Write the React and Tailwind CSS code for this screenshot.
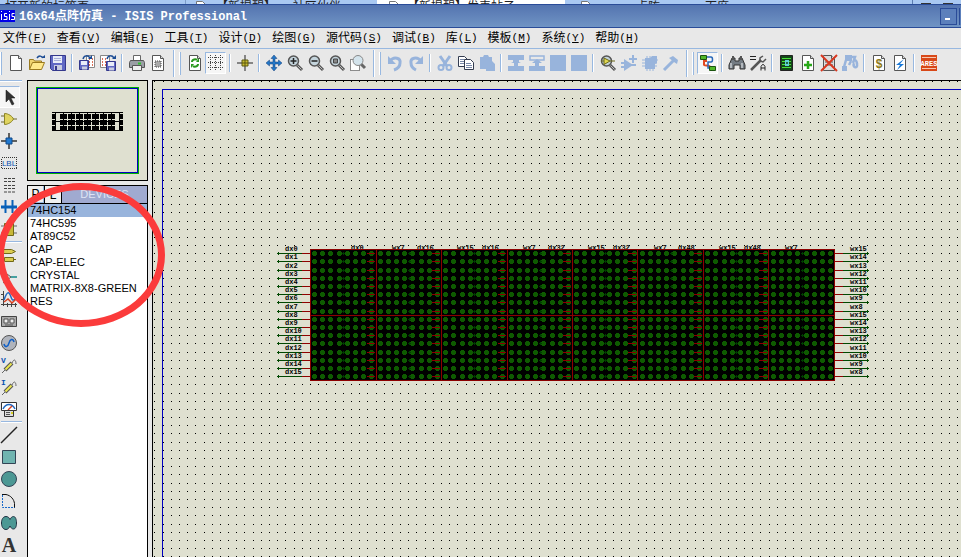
import { useState } from 'react';

const MENUS = [
    ['文件', 'F'], ['查看', 'V'], ['编辑', 'E'], ['工具', 'T'], ['设计', 'D'], ['绘图', 'G'],
    ['源代码', 'S'], ['调试', 'B'], ['库', 'L'], ['模板', 'M'], ['系统', 'Y'], ['帮助', 'H'],
]

const DEVICES = ['74HC154', '74HC595', 'AT89C52', 'CAP', 'CAP-ELEC', 'CRYSTAL', 'MATRIX-8X8-GREEN', 'RES']

// light blue used for everything that is disabled
const OFF = '#98b4dc'

const Sheet = ({ children, fill = '#fff' }) => (
    <>
        <path d="M2.500 .5h8l3 3v12h-11z" fill={fill} stroke="#555" />
        <path d="M10.500 .5v3h3" fill="#ddd" stroke="#555" />
        {children}
    </>
)

const Lens = ({ children }) => (
    <>
        <path d="M10 10l5 5" stroke="#555" strokeWidth="3" />
        <path d="M10.500 10.500l4 4" stroke="#bbb" strokeWidth="1" />
        <circle cx="6.500" cy="6" r="5" fill="#c4d4dc" stroke="#555" strokeWidth="1.500" />
        {children}
    </>
)

const Floppy = () => (
    <>
        <path d="M.5 .5h15v15h-13l-2-2z" fill="#6068c4" stroke="#34388c" />
        <path d="M3 1h9v7H3z" fill="#e8ecf8" />
        <path d="M4 3.500h7M4 5.500h7" stroke="#a8b0d8" />
        <path d="M4 10h8v5H4z" fill="#c8cce0" />
        <path d="M5 11h2v4H5z" fill="#34388c" />
    </>
)

const SmallFloppy = ({ x, y }) => (
    <g transform={`translate(${x} ${y})`}>
        <path d="M.5 .5h9v9h-9z" fill="#6068c4" stroke="#34388c" />
        <path d="M2 1h6v4H2z" fill="#e8ecf8" />
        <path d="M3 6.500h5v3H3z" fill="#c8cce0" />
    </g>
)

const ICONS = {
    new: <Sheet />,
    open: (
        <>
            <path d="M.5 14.500v-10h4l1 1.500h7v3" fill="#f0d470" stroke="#9a7a20" />
            <path d="M.5 14.500l3-7h12l-3 7z" fill="#ffe98c" stroke="#9a7a20" />
            <path d="M8 3c2-3 5-2 6 0" fill="none" stroke="#1c4c94" strokeWidth="1.500" />
            <path d="M12 3h4v-3z" fill="#1c4c94" />
        </>
    ),
    save: <Floppy />,
    import: (
        <>
            <path d="M7.500 .5h8v12h-8z" fill="#fff" stroke="#888" />
            <path d="M10 4h4M10 7h4M10 10h4" stroke="#d04020" strokeWidth="1.500" strokeDasharray="1 2" />
            <SmallFloppy x="0" y="5" />
            <path d="M4 4c1-4 5-4 7-1" fill="none" stroke="#1c4c94" strokeWidth="1.500" />
            <path d="M9 4h4v-4z" fill="#1c4c94" />
        </>
    ),
    export: (
        <>
            <path d="M.5 .5h9v12h-9z" fill="#fff" stroke="#888" />
            <path d="M2 4h6M2 7h6M2 10h6" stroke="#d04020" strokeWidth="1.500" strokeDasharray="1 2" />
            <SmallFloppy x="6" y="6" />
            <path d="M7 4c1-4 5-4 7-1" fill="none" stroke="#1c4c94" strokeWidth="1.500" />
            <path d="M12 4h4v-4z" fill="#1c4c94" />
        </>
    ),
    print: (
        <>
            <path d="M4.500 7v-6.500h7v6.500" fill="#fff" stroke="#666" />
            <path d="M1.500 5.500h13l1 2v5h-15v-5z" fill="#9a9ea4" stroke="#555" />
            <path d="M3.500 10.500h9v5h-9z" fill="#eee" stroke="#555" />
            <path d="M9 7.500h3v2H9z" fill="#30c030" />
        </>
    ),
    area: (
        <Sheet>
            <path d="M5 6h6v6H5z" fill="#aaa" stroke="#444" strokeDasharray="1 1" />
        </Sheet>
    ),
    refresh: (
        <Sheet>
            <path d="M5 7c0-3 4-3 5-2M11 9c0 3-4 3-5 2" fill="none" stroke="#28981c" strokeWidth="2" />
            <path d="M9 7h3V3zM7 9H4v4z" fill="#28981c" />
        </Sheet>
    ),
    grid: (
        <path
            d="M0 2.500h16M0 7.500h16M0 12.500h16M2.500 0v16M7.500 0v16M12.500 0v16"
            stroke="#444" strokeDasharray="1 1" shapeRendering="crispEdges"
        />
    ),
    origin: (
        <>
            <path d="M8 0v16M0 8h16" stroke="#222" />
            <path d="M5 5h6v6H5z" fill="#c8bc30" stroke="#5c5810" />
            <path d="M8 5v6M5 8h6" stroke="#5c5810" />
        </>
    ),
    pan: (
        <path
            d="M8 0l3 3.500H9V7h3.500V5L16 8l-3.500 3V9H9v3.500h2L8 16l-3-3.500h2V9H3.500v2L0 8l3.500-3v2H7V3.500H5z"
            fill="#2478c8" stroke="#123c78" strokeWidth=".5"
        />
    ),
    zoomIn: <Lens><path d="M6.500 3v6M3.500 6h6" stroke="#222" strokeWidth="1.500" /></Lens>,
    zoomOut: <Lens><path d="M3.500 6h6" stroke="#222" strokeWidth="1.500" /></Lens>,
    zoomAll: <Lens><path d="M4.500 4h4v4h-4z" fill="#888" stroke="#444" /></Lens>,
    zoomArea: (
        <>
            <path d="M.5 4.500h9v11h-9z" fill="#fff" stroke="#222" strokeDasharray="1 1" />
            <path d="M11 9l4 4" stroke="#666" strokeWidth="3" />
            <circle cx="8" cy="5.500" r="5" fill="#d4e4ec" stroke="#888" />
        </>
    ),
    undo: (
        <>
            <path d="M3 6c4-5 11-3 10 2 0 4-3 6-6 7" fill="none" stroke={OFF} strokeWidth="3" />
            <path d="M1 1v8h8z" fill={OFF} />
        </>
    ),
    redo: (
        <>
            <path d="M13 6C9 1 2 3 3 8c0 4 3 6 5 7" fill="none" stroke={OFF} strokeWidth="3" />
            <path d="M15 1v8H7z" fill={OFF} />
        </>
    ),
    cut: (
        <>
            <path d="M3 1l7 10M13 1L6 11" stroke={OFF} strokeWidth="3" />
            <circle cx="4" cy="12.500" r="2.500" fill="none" stroke={OFF} strokeWidth="2" />
            <circle cx="12" cy="12.500" r="2.500" fill="none" stroke={OFF} strokeWidth="2" />
        </>
    ),
    copy: (
        <>
            <path d="M.5 1.500h6l3 3v7h-9z" fill="#fff" stroke="#333c50" />
            <path d="M2 4.500h4M2 6.500h5M2 8.500h5" stroke="#7888a8" />
            <path d="M6.500 4.500h6l3 3v7h-9z" fill="#fff" stroke="#333c50" />
            <path d="M8 8.500h5M8 10.500h6M8 12.500h6" stroke="#7888a8" />
        </>
    ),
    paste: <path d="M1 2h3l1-2h4l1 2h3v4l3 3v7H7v-2H1z" fill={OFF} />,
    blockCopy: <path d="M0 0h16v5h-5v2l2 1h-3v3h6v5H0v-5h6V8H3l2-1V5H0z" fill={OFF} />,
    blockMove: (
        <>
            <path d="M1 1h14v4H1z" fill="none" stroke={OFF} strokeWidth="1.500" />
            <path d="M8 4l5 4h-3v3h6v5H0v-5h6V8H3z" fill={OFF} />
        </>
    ),
    block: <path d="M0 0h16v16H0z" fill={OFF} />,
    pick: (
        <Lens>
            <path d="M4 3l6 3-6 3.500z" fill="#e0d850" stroke="#6c6818" />
            <path d="M1 6h3M10 6h5" stroke="#6c6818" />
        </Lens>
    ),
    makeDevice: (
        <>
            <path d="M3 4l9 6-9 6z" fill={OFF} />
            <path d="M0 8h5M0 12h5M10 10h5M12 0v8M8 4h8" stroke={OFF} strokeWidth="2" />
        </>
    ),
    packaging: (
        <>
            <path d="M3 3h5l2-2h5v7l-2 1v5H3z" fill={OFF} />
            <path d="M5 1v15M8 1v15M11 2v14M0 5h16M0 8h15M0 11h15" stroke={OFF} />
        </>
    ),
    decompose: (
        <>
            <path d="M6 3l4-2 5 4-1 4-3-2z" fill={OFF} />
            <path d="M11 5L1 15" stroke={OFF} strokeWidth="3" />
        </>
    ),
    wire: (
        <>
            <path d="M7 6H4v4c0 1 6 0 6 2" fill="none" stroke="#e04820" strokeWidth="2" />
            <path d="M6 2h5c2 0 2 5 0 5H8v6h2" fill="none" stroke="#2868b8" strokeWidth="1.500" />
            <path d="M.5 .5h6v4h-6zM9.500 11.500h6v4h-6z" fill="#50b828" stroke="#1c5410" />
        </>
    ),
    find: (
        <>
            <path d="M3 3h3v3h4V3h3l3 7v4h-5v-4H5v4H0v-4z" fill="#747c84" stroke="#333" />
            <path d="M4 1v4M12 1v4" stroke="#555" strokeWidth="2" />
            <path d="M2 8v5M13 8v5" stroke="#c8ccd0" strokeWidth="1.500" />
        </>
    ),
    assign: (
        <>
            <path d="M0 1.500h6M0 4.500h6" stroke="#222" />
            <path d="M1 15L11 5" stroke="#555" strokeWidth="2.500" />
            <path d="M13 1l-3 2v3l3 1 3-3" fill="none" stroke="#555" strokeWidth="1.500" />
            <path d="M11 15.500v-4l1.500-2h1l1.500 2v4M11 13h4" fill="none" stroke="#222" />
        </>
    ),
    explorer: (
        <>
            <path d="M1.500 .5h12v15h-12z" fill="#124818" stroke="#222" />
            <path d="M3 3.500h9M3 6.500h3M10 6.500h2M3 9.500h3M10 9.500h2M3 12.500h9" stroke="#48e038" />
            <path d="M6 5h4v6H6z" fill="#60d0d8" />
            <circle cx="8" cy="8" r="1" fill="#124818" />
        </>
    ),
    addSheet: <Sheet><path d="M8 6v8M4 10h8" stroke="#28a818" strokeWidth="2.500" /></Sheet>,
    removeSheet: (
        <Sheet fill="#ddd">
            <path d="M4 7h8M4 10h8" stroke="#555" />
            <path d="M0 0l16 16M16 0L0 16" stroke="#d83820" strokeWidth="2" />
        </Sheet>
    ),
    hierarchy: (
        <>
            <path d="M3 0h7v6H3zM0 11h5v5H0z" fill={OFF} />
            <path d="M4 5l-2 7M9 6l-2 4M10 2h3l-2 6M12 8c-2 5 4 6 3 1 0-2 0-3-2-4" fill="none" stroke={OFF} strokeWidth="2.500" />
        </>
    ),
    bom: (
        <Sheet>
            <text x="8" y="13" textAnchor="middle" fill="#8c7818" fontSize="12" fontWeight="bold" fontFamily="Liberation Sans, sans-serif">$</text>
        </Sheet>
    ),
    erc: <Sheet><path d="M12 4L4 10h4l-3 5 7-6H8z" fill="#1878d8" /></Sheet>,
    ares: (
        <>
            <path d="M0 0h16v16H0z" fill="#d84818" />
            <path d="M1 2.500h14M1 13.500h14" stroke="#f8c8b0" />
            <text x="8" y="11" textAnchor="middle" fill="#fff" fontSize="7" fontWeight="bold" fontFamily="Liberation Mono, monospace">ARES</text>
        </>
    ),

    // mode selector
    select: <path d="M5 1v12l3-3 3 6 2-1-3-6h4z" fill="#333" stroke="#111" strokeWidth=".5" />,
    component: (
        <>
            <path d="M0 5h4M0 11h4M12 8h4" stroke="#6c6830" />
            <path d="M3.500 2.500c4 0 8 3 9 5.500-1 2.500-5 5.500-9 5.500z" fill="#e0d460" stroke="#8c8428" />
        </>
    ),
    junction: (
        <>
            <path d="M8 0v16M0 8h16" stroke="#333" strokeWidth="1.500" />
            <path d="M5 5h6v6H5z" fill="#2078d0" stroke="#104888" />
        </>
    ),
    label: (
        <>
            <path d="M.5 2.500h15v11H.5z" fill="none" stroke="#333" strokeDasharray="1 1" shapeRendering="crispEdges" />
            <text x="8" y="11" textAnchor="middle" fill="#0850b0" fontSize="8" fontFamily="Liberation Sans, sans-serif">LBL</text>
        </>
    ),
    script: <path d="M3 1.500h11M3 4.500h11M3 8.500h11M3 11.500h11M3 15h11" stroke="#444" strokeDasharray="3 1" />,
    bus: (
        <>
            <path d="M0 8h16" stroke="#0860b8" strokeWidth="3" />
            <path d="M4.500 1v13M11.500 1v13" stroke="#0860b8" strokeWidth="2" />
        </>
    ),
    subcircuit: (
        <>
            <path d="M0 5h16M0 12h16" stroke="#666" />
            <path d="M3.500 2.500h9v12h-9z" fill="#c8b838" stroke="#706818" />
        </>
    ),
    terminal: (
        <>
            <path d="M2.500 2.500h8l4 2-4 2h-8zM3.500 10.500h9v4h-9z" fill="#dccc50" stroke="#706818" />
            <path d="M0 4.500h3M12 12.500h3" stroke="#706818" />
        </>
    ),
    pin: (
        <>
            <path d="M2 2l8 6-8 6" fill="none" stroke="#555" />
            <path d="M10 8h6" stroke="#108888" strokeWidth="1.500" />
        </>
    ),
    graph: (
        <>
            <path d="M2.500 0v15M0 13.500h16M0 3.500h3M0 8.500h3M6.500 12v4M10.500 12v4M14.500 12v4" stroke="#444" />
            <path d="M3 9c3-9 5-9 7-3s4 2 6-1" fill="none" stroke="#2068c0" strokeWidth="1.500" />
            <path d="M3 11l4-3 4 4 4-4" fill="none" stroke="#d84020" strokeWidth="1.500" />
        </>
    ),
    tape: (
        <>
            <path d="M.5 3.500h15v10H.5z" fill="#aaa" stroke="#444" />
            <path d="M3 6h4v4H3zM9 6h4v4H9z" fill="#eee" stroke="#555" />
            <path d="M4 12h8" stroke="#555" />
        </>
    ),
    generator: (
        <>
            <circle cx="8" cy="8" r="7.500" fill="#b0b4bc" stroke="#555" />
            <path d="M3 9c1 4 4 3 5-1s4-5 5-1" fill="none" stroke="#1060c8" strokeWidth="1.500" />
        </>
    ),
    voltage: (
        <>
            <path d="M1 16l3-3M11 6c2-5 4-3 4 1" fill="none" stroke="#666" />
            <path d="M4 13l7-7" stroke="#555" strokeWidth="4" />
            <path d="M4.500 12.500l6-6" stroke="#ece850" strokeWidth="2" />
            <text x="0" y="6" fill="#0850b0" fontSize="8" fontWeight="bold" fontFamily="Liberation Mono, monospace">V</text>
        </>
    ),
    current: (
        <>
            <path d="M1 16l3-3M11 6c2-5 4-3 4 1" fill="none" stroke="#666" />
            <path d="M4 13l7-7" stroke="#555" strokeWidth="4" />
            <path d="M4.500 12.500l6-6" stroke="#ece850" strokeWidth="2" />
            <text x="0" y="6" fill="#0850b0" fontSize="8" fontWeight="bold" fontFamily="Liberation Mono, monospace">I</text>
        </>
    ),
    meter: (
        <>
            <path d="M.5 1.500h15v8H.5z" fill="#fff" stroke="#333" />
            <path d="M2 8c3-6 9-6 12 0" fill="none" stroke="#2068c0" strokeWidth="1.500" />
            <path d="M7 9l4-4" stroke="#d84020" strokeWidth="1.500" />
            <path d="M3.500 9.500h9v6h-9z" fill="#ddd" stroke="#333" />
            <path d="M5 11.500h4M5 13.500h4" stroke="#555" />
            <path d="M10 11h2v2h-2z" fill="#d8d020" />
        </>
    ),
    line: <path d="M0 16L16 0" stroke="#222" strokeWidth="1.500" />,
    box: <path d="M1.500 1.500h13v13h-13z" fill="#70b4b0" stroke="#345" />,
    circle: <circle cx="8" cy="8" r="7.500" fill="#4c9894" stroke="#345" />,
    arc: (
        <>
            <path d="M1.500 2v12.500H14" fill="none" stroke="#1868c8" strokeDasharray="2 1" />
            <path d="M1 1.500h4c5 1 8 5 8.500 9v4" fill="none" stroke="#111" />
        </>
    ),
    closedPath: (
        <path
            d="M5 1.500c2 0 3 1 4 3 1-2 2-3 3.500-3 2 0 3 3 3 6.500s-1 6-3 6c-1.500 0-2.500-1-3.500-3-1 2-2 3.500-4 3.500-3 0-4.500-3-4.500-6.500S2 1.500 5 1.500z"
            fill="#4c9894" stroke="#234"
        />
    ),
    text: <text x="8" y="15" textAnchor="middle" fill="#333" fontSize="20" fontWeight="bold" fontFamily="Liberation Serif, serif">A</text>,
}

// '|' is a thin separator, '||' ends a toolbar group
const TOOLBAR = [
    'new', 'open', 'save', '|', 'import', 'export', '|', 'print', 'area', '||',
    'refresh', 'grid', '|', 'origin', '|', 'pan', 'zoomIn', 'zoomOut', 'zoomAll', 'zoomArea', '||',
    'undo', 'redo', '|', 'cut', 'copy', 'paste', '|', 'blockCopy', 'blockMove', 'block', 'block', '|',
    'pick', 'makeDevice', 'packaging', 'decompose', '||',
    'wire', '|', 'find', 'assign', '|', 'explorer', 'addSheet', 'removeSheet', 'hierarchy', '|',
    'bom', 'erc', '|', 'ares',
]

const MODES = [
    'select', 'component', 'junction', 'label', 'script', 'bus', 'subcircuit', '|',
    'terminal', 'pin', 'graph', 'tape', 'generator', 'voltage', 'current', 'meter', '|',
    'line', 'box', 'circle', 'arc', 'closedPath', 'text',
]

const Icon = ({ name }) => (
    <svg viewBox="0 0 16 16" className="h-4 w-4 overflow-visible" aria-hidden="true">{ICONS[name]}</svg>
)

const TabIcon = () => (
    <svg viewBox="0 0 10 12" className="h-3 w-[10px] shrink-0" aria-hidden="true">
        <path d="M.5 .5h6l3 3v8h-9z" fill="#fff" stroke="#777" />
    </svg>
)

// only the upper edge of the browser's tabs looks out above the window
const BrowserStrip = () => (
    <div className="flex h-1 shrink-0 items-start overflow-hidden bg-[#a9c8f2] text-xs leading-3 whitespace-nowrap text-[#222]">
        <div className="w-[185px] pt-px pl-[5px]">打开新的标签页</div>
        <div className="flex w-48 gap-[10px] border-l border-[#7d9cc8] pt-px pl-[10px]">
            <TabIcon />
            <span>【新提醒】</span>
            <span>_社区伙伴</span>
        </div>
        <div className="flex w-[188px] gap-2 bg-white pt-px pl-3">
            <TabIcon />
            <span>【新提醒】发表帖子</span>
        </div>
        <div className="flex grow gap-[45px] pt-px pl-4">
            <TabIcon />
            <span>点阵</span>
            <span>百度</span>
        </div>
        <div className="flex h-full gap-3 border-l border-[#5c7cb0] pt-[3px] pr-2 pl-2">
            <div className="h-px w-[10px] bg-[#333]" />
            <div className="h-px w-[10px] bg-[#333]" />
        </div>
    </div>
)

const TitleBar = () => (
    <header className="flex h-6 shrink-0 items-center justify-between overflow-hidden border-y border-[#2a4c98] bg-linear-to-b from-[#5474b0] to-[#7094c4]">
        <div className="flex items-center gap-1">
            <svg viewBox="0 0 15 12" className="h-3 w-[15px]" aria-hidden="true">
                <path d="M0 0h15v12H0z" fill="#0000e8" />
                <path
                    d="M1.500 4v6M1.500 1v1M7 3.500H4.500v3H7v3H3.500M9.500 4v6M9.500 1v1M14.500 3.500H12v3h2.500v3H11"
                    fill="none" stroke="#fff"
                />
            </svg>
            <h1 className="pt-[2px] font-['Liberation_Mono','Noto_Sans_CJK_SC',monospace] text-xs font-bold whitespace-pre text-white">16x64点阵仿真 - ISIS Professional</h1>
        </div>
        <div className="flex shrink-0 gap-[2px]">
            <button aria-label="Minimize" className="flex h-[17px] w-[17px] items-end border border-[#2a4c98] bg-[#5c80bc] pb-1 pl-1">
                <span className="h-[2px] w-[5px] bg-white" />
            </button>
            <button aria-label="Restore" className="h-[17px] w-[2px] border-l border-[#2a4c98] bg-[#5c80bc]" />
        </div>
    </header>
)

const MenuBar = () => (
    <nav className="flex h-5 shrink-0 items-center gap-[10px] overflow-hidden pl-[3px] text-xs whitespace-nowrap text-black">
        {MENUS.map(([name, key]) => (
            <button key={key} className="flex items-center">
                {name}
                <span className="font-['Liberation_Mono',monospace] text-[11px]">(<u>{key}</u>)</span>
            </button>
        ))}
    </nav>
)

const Separator = ({ wide }) => wide ? (
    <div className="flex h-full w-4 shrink-0 gap-1 pt-px pl-[5px]">
        <div className="h-[27px] w-[2px] border-r border-white bg-[#98b8e0]" />
        <div className="mt-[2px] h-[23px] w-[2px] border-r border-[#98b8e0] bg-white" />
    </div>
) : (
    <div className="w-2 shrink-0 pl-[3px]">
        <div className="h-[18px] w-[2px] border-r border-white bg-[#98b8e0]" />
    </div>
)

const ToolBar = () => {
    const [pressed, setPressed] = useState({ grid: true, wire: true })

    return (
        <div className="flex h-8 shrink-0 items-center overflow-hidden border-t border-[#98b8e0] pb-[3px]">
            <div className="mr-[3px] h-[23px] w-[2px] shrink-0 border-r border-[#98b8e0] bg-white" />
            {TOOLBAR.map((name, i) => {
                if (name === '|') return <Separator key={i} />
                if (name === '||') return <Separator key={i} wide />
                return (
                    <button
                        key={i}
                        aria-label={name}
                        onClick={() => name in pressed && setPressed({ ...pressed, [name]: !pressed[name] })}
                        className={
                            pressed[name]
                                ? 'flex h-[22px] w-[21px] shrink-0 items-center justify-center border border-white border-t-[#98b8e0] border-l-[#98b8e0] bg-[#f6f6f6]'
                                : 'flex h-[22px] w-[21px] shrink-0 items-center justify-center'
                        }
                    >
                        <Icon name={name} />
                    </button>
                )
            })}
        </div>
    )
}

const ModeBar = () => {
    const [mode, setMode] = useState('select')

    return (
        <div className="flex w-[27px] shrink-0 flex-col overflow-hidden">
            <div className="mb-1 h-[2px] w-[22px] shrink-0 border-b border-white bg-[#98b8e0]" />
            {MODES.map((name, i) => name === '|' ? (
                <div key={i} className="flex h-1 w-[22px] shrink-0 items-center pl-px">
                    <div className="h-[2px] w-full border-b border-white bg-[#98b8e0]" />
                </div>
            ) : (
                <button
                    key={i}
                    aria-label={name}
                    onClick={() => setMode(name)}
                    className={
                        mode === name
                            ? 'flex h-[22px] w-5 shrink-0 items-center border-t border-r border-b border-white border-t-[#98b8e0] bg-[#f6f6f6] pl-px'
                            : 'flex h-[22px] w-5 shrink-0 items-center pl-px'
                    }
                >
                    <Icon name={name} />
                </button>
            ))}
        </div>
    )
}

const Overview = () => (
    <div className="h-[101px] shrink-0 border border-black bg-[#dfe0d0] px-2 py-[6px]">
        <div className="h-full border border-[#00b000]">
            <div className="flex h-full justify-center border border-[#0000c0] pt-[23px]">
                <svg viewBox="0 0 71 19" className="h-[19px] w-[71px]" shapeRendering="crispEdges" aria-hidden="true">
                    <path d="M0 0h71v1H0zM0 9h71v1H0zM0 18h71v1H0zM3 0h1v19h-1zM67 0h1v19h-1z" />
                    {[2, 8, 14].map((y) => (
                        <g key={y}>
                            <path d={`M0 ${y}h4v5H0zM67 ${y}h4v5h-4z`} />
                            {[8, 16, 24, 32, 40, 48, 56].map((x) => (
                                <path key={x} d={`M${x} ${y}h7v5h-7zM${x + 3} ${y - 2}h1v2h-1z`} />
                            ))}
                        </g>
                    ))}
                </svg>
            </div>
        </div>
    </div>
)

const DeviceList = () => {
    const [current, setCurrent] = useState('74HC154')

    return (
        <section className="flex grow flex-col border border-b-0 border-black bg-white">
            <div className="flex h-[17px] shrink-0 bg-[#a0aad0] text-xs leading-4">
                <button className="w-4 border-r border-b border-[#98b8e0] bg-[#f0f0f0] text-black">P</button>
                <button className="w-[18px] border-r border-l border-black bg-[#f0f0f0] text-black">L</button>
                <h2 className="grow text-center text-[11px] text-[#dfe4f4]">DEVICES</h2>
            </div>
            <ul className="border-t border-black text-[11px] leading-[13px] text-black">
                {DEVICES.map((device) => (
                    <li key={device}>
                        <button
                            onClick={() => setCurrent(device)}
                            className={current === device ? 'block w-full bg-[#98b4dc] pl-[2px] text-left' : 'block w-full pl-[2px] text-left'}
                        >
                            {device}
                        </button>
                    </li>
                ))}
            </ul>
        </section>
    )
}

// the sheet is drawn on a snap grid, every point is rounded to a whole pixel
const PITCH = 8.19
const at = (start, n) => Math.round(start + n * PITCH)
const range = (n) => Array.from({ length: n }, (_, i) => i)

const gridDots = range(240)
    .map((i) => range(150).map((j) => `M${at(1.4, i)} ${at(0.3, j)}h1v1h-1z`).join(''))
    .join('')

const rows = range(16).map((i) => at(172.3, i))
const cols = range(64).map((i) => at(161.1, i))
const edges = [223, 288, 354, 419, 484, 550, 615]

const leds = rows
    .map((y) => cols.map((x) => `M${x - 1} ${y - 2}h3v1h1v3h-1v1h-3v-1h-1v-3h1z`).join(''))
    .join('')

const NET_LABELS = [
    [198, 'dx0'], [239, 'wx7'], [264, 'dx16'], [304, 'wx15'], [329, 'dx16'], [370, 'wx7'], [395, 'dx32'],
    [435, 'wx15'], [460, 'dx32'], [501, 'wx7'], [525, 'dx48'], [566, 'wx15'], [591, 'dx48'], [632, 'wx7'],
]

const Schematic = () => (
    <main className="relative grow overflow-hidden border-t border-l border-black bg-[#dfe0d0]">
        <svg className="absolute inset-0 h-full w-full" shapeRendering="crispEdges" role="img" aria-label="16x64 LED matrix">
            <path d={gridDots} />
            <path d="M9 8h3000v1H10v3000H9z" fill="#0000c0" />
            <g fontSize="7" fontWeight="bold" fontFamily="Liberation Mono, monospace">
                {NET_LABELS.map(([x, label]) => <text key={x} x={x} y="169">{label}</text>)}
                {rows.map((y, i) => (
                    <g key={y}>
                        <path d={`M124 ${y}h26v1h-26zM125 ${y - 1}h1v3h-1zM690 ${y}h26v1h-26zM714 ${y - 1}h1v3h-1z`} fill="#004800" />
                        <path d={`M149 ${y}h9v1h-9zM682 ${y}h8v1h-8z`} fill="#900000" />
                        <text x="132" y={y - 2}>{`dx${i}`}</text>
                        <text x="697" y={y - 2}>{`wx${15 - (i % 8)}`}</text>
                    </g>
                ))}
            </g>
            <path d="M157 168h525v132H157z" />
            <path d={leds} fill="#0e5a00" />
            {range(8).map((i) => (
                <path
                    key={i}
                    d={rows.map((y) => `M${at(190.2, i * 8) - 1} ${y}h3v1h-3zM${at(190.2, i * 8)} ${y - 1}h1v3h-1z`).join('')}
                    fill="#003c00"
                />
            ))}
            {edges.map((x) => (
                <path key={x} d={`M${x} 168h1v132h-1z${rows.map((y) => `M${x - 9} ${y}h8v1h-8z`).join('')}`} fill="#8c0000" />
            ))}
            <path d="M157 234h525v1H157z" fill="#8c0000" />
            <path d="M157 168h525v132H157zM158 169v130h523V169z" fill="#8c0000" fillRule="evenodd" />
        </svg>
    </main>
)

const App = () => {
    return (
        <div className="relative flex h-screen flex-col overflow-hidden bg-[#e8e8e8] font-['Liberation_Sans','Noto_Sans_CJK_SC',sans-serif]">
            <BrowserStrip />
            <TitleBar />
            <MenuBar />
            <ToolBar />
            <div className="flex min-h-0 grow">
                <ModeBar />
                <aside className="mr-1 flex w-[121px] shrink-0 flex-col gap-1">
                    <Overview />
                    <DeviceList />
                </aside>
                <Schematic />
            </div>
            {/* red marker round the device list */}
            <div className="pointer-events-none absolute top-[183px] -left-[3px] h-36 w-[168px] rounded-[50%] border-[7px] border-[#fb3b3b]" />
        </div>
    )
}

export default App
